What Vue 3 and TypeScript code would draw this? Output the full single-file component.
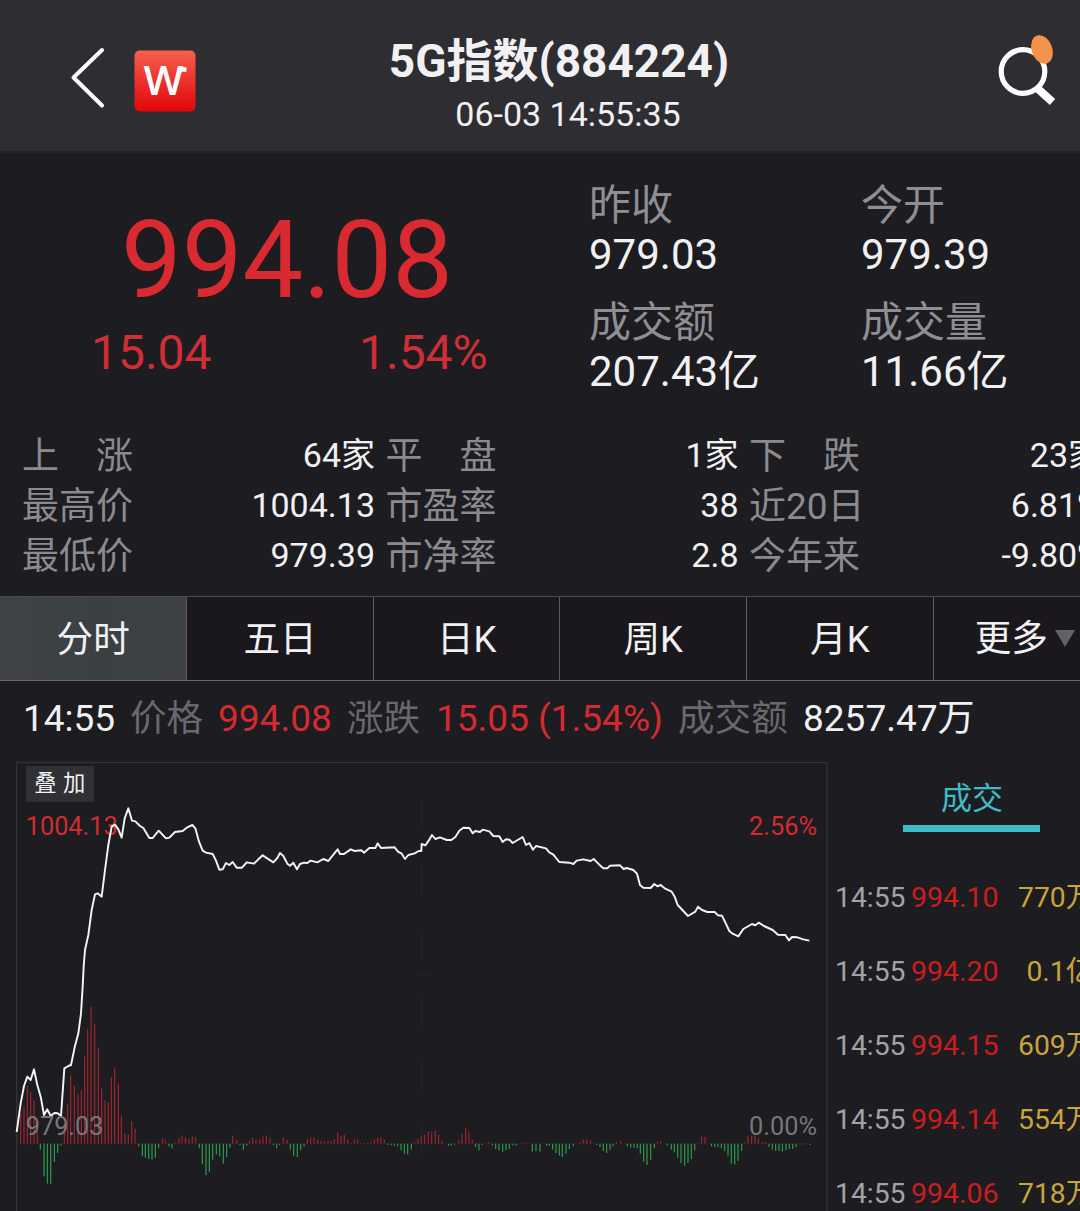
<script setup lang="ts">
interface Quote { label: string; value: string }
interface Trade { time: string; price: string; volume: string }

const quotes: Quote[] = [
  { label: '昨收', value: '979.03' },
  { label: '今开', value: '979.39' },
  { label: '成交额', value: '207.43亿' },
  { label: '成交量', value: '11.66亿' },
]

const stats: Quote[] = [
  { label: '上　涨', value: '64家' },
  { label: '平　盘', value: '1家' },
  { label: '下　跌', value: '23家' },
  { label: '最高价', value: '1004.13' },
  { label: '市盈率', value: '38' },
  { label: '近20日', value: '6.81%' },
  { label: '最低价', value: '979.39' },
  { label: '市净率', value: '2.8' },
  { label: '今年来', value: '-9.80%' },
]

const tabs: string[] = ['分时', '五日', '日K', '周K', '月K', '更多']

const trades: Trade[] = [
  { time: '14:55', price: '994.10', volume: '770万' },
  { time: '14:55', price: '994.20', volume: '0.1亿' },
  { time: '14:55', price: '994.15', volume: '609万' },
  { time: '14:55', price: '994.14', volume: '554万' },
  { time: '14:55', price: '994.06', volume: '718万' },
]

// Minute line, in chart units (three per pixel)
const line = `50,1146 62,1060 72,1008 82,980 92,990 102,958 112,1005 122,1040 132,1095 142,1078 152,1098 163,1089
173,1090 183,1098 193,955 205,948 213,945 224,892 235,850 243,790 248,710 251,650 255,600 265,555 275,480 285,433
293,430 305,440 315,360 325,285 335,230 345,224 355,238 365,263 374,205 385,175 396,212 406,214 420,228 430,234
448,264 458,264 476,242 498,265 508,263 525,246 548,243 562,232 577,225 586,235 597,275 608,302 618,308 638,312
648,332 658,359 668,358 678,339 688,345 698,336 710,353 726,353 740,337 762,341 775,328 788,316 820,337 832,324
840,309 850,318 862,341 870,347 880,338 891,358 900,342 912,338 922,339 932,332 952,337 970,327 985,333 1000,314
1013,298 1020,312 1032,312 1052,298 1064,303 1084,301 1092,308 1108,294 1126,294 1133,280 1143,294 1184,292
1194,305 1204,310 1215,327 1225,315 1244,310 1256,303 1264,303 1265,282 1276,286 1286,272 1296,255 1306,267
1320,262 1340,270 1354,270 1366,261 1378,242 1390,233 1408,234 1418,250 1426,243 1440,246 1448,239 1468,244
1480,258 1498,259 1508,276 1518,268 1528,269 1538,279 1568,261 1578,285 1588,279 1599,299 1608,288 1638,295
1648,307 1660,314 1678,336 1708,338 1720,342 1730,332 1750,328 1772,333 1781,327 1798,344 1810,355 1822,355
1830,347 1860,346 1871,357 1880,354 1900,360 1911,371 1920,405 1930,413 1952,414 1963,402 1972,409 1982,405
1994,415 2015,425 2024,440 2033,465 2050,483 2064,498 2086,485 2094,470 2106,480 2122,486 2144,486 2154,496
2166,497 2178,522 2188,543 2198,551 2215,559 2230,537 2256,522 2266,526 2276,518 2292,528 2318,540 2334,554
2356,555 2367,571 2376,561 2392,562 2410,568 2428,572`

// Momentum bars as "x,height"; a positive height rises above the base line
const barData = `62,90 72,110 82,175 92,155 102,130 112,45 121,-18 132,-98 142,-120 152,-120 163,-55 173,-28 183,-6
193,60 203,120 212,205 223,175 234,150 244,160 254,262 263,345 273,410 284,360 295,288 305,165 315,130 325,125
334,200 344,228 355,180 364,85 375,30 385,28 395,68 405,45 416,-8 427,-38 436,-42 446,-46 456,-48 466,-42 476,-14
487,16 496,12 507,-8 516,-14 527,4 537,18 546,24 556,18 567,14 577,22 587,20 598,-14 607,-62 618,-94 628,-85
638,-48 649,-32 659,-38 670,-60 680,-40 690,-12 698,24 710,12 720,-4 730,-18 740,-6 748,8 758,18 768,12 779,14
789,22 799,24 810,18 820,-4 830,-14 839,-4 850,18 861,12 871,-18 881,-36 892,-40 902,-20 912,-8 922,14 932,18
942,18 953,12 963,8 974,6 984,8 994,8 1003,14 1013,34 1023,24 1033,26 1043,12 1053,3 1063,14 1073,12 1083,2
1093,2 1103,3 1113,6 1123,12 1133,18 1143,18 1153,12 1163,-4 1173,-5 1183,-6 1193,-8 1203,-20 1213,-30 1223,-32
1234,-18 1244,4 1254,14 1264,22 1274,26 1285,36 1295,36 1306,40 1316,26 1326,8 1346,-6 1354,-6 1364,-3 1376,10
1386,30 1397,46 1407,36 1417,12 1427,-10 1437,-20 1447,-4 1466,5 1477,-5 1487,-16 1497,-20 1508,-25 1518,-20
1528,-16 1539,-6 1549,-6 1567,3 1577,3 1597,-24 1608,-22 1620,-24 1640,-6 1648,-6 1658,-18 1668,-28 1678,-36
1687,-40 1698,-30 1708,-16 1720,-8 1740,5 1750,12 1760,12 1771,9 1790,-4 1800,-10 1810,-22 1820,-28 1830,-18
1839,-8 1850,5 1862,8 1882,-8 1892,-12 1902,-12 1912,-14 1921,-30 1931,-54 1941,-64 1952,-48 1963,-14 1972,5
1982,8 2002,-5 2014,-18 2023,-26 2033,-42 2043,-58 2054,-66 2064,-58 2074,-46 2084,-20 2094,3 2105,22 2115,20
2134,-8 2144,-10 2154,-10 2164,-14 2174,-22 2184,-36 2194,-60 2204,-62 2214,-52 2225,-22 2234,4 2244,24 2255,24
2265,24 2275,16 2286,5 2296,5 2307,-10 2317,-18 2327,-22 2337,-22 2347,-24 2358,-20 2368,-16 2378,-16 2388,-10
2400,-2 2410,-2 2430,-4`

const base = 1181
const bars = barData.split(/\s+/).map((pair) => {
  const [x, h] = pair.split(',').map(Number)
  return { x: x - 1.7, y: h > 0 ? base - h : base, h: Math.abs(h), up: h > 0 }
})
</script>

<template>
  <div class="page">
    <header class="header">
      <div class="nav">
        <svg class="back" width="40" height="64" viewBox="0 0 40 64">
          <path d="M36 4 7.500 31.500 36 59.500" fill="none" stroke="#fff" stroke-width="4" stroke-linecap="round" stroke-linejoin="round" />
        </svg>
        <svg class="logo" width="62" height="62" viewBox="0 0 62 62">
          <defs>
            <linearGradient id="logo-fill" x1="0" y1="0" x2="0" y2="1">
              <stop offset="0" stop-color="#f4614b" />
              <stop offset="0.45" stop-color="#ee3531" />
              <stop offset="1" stop-color="#df0708" />
            </linearGradient>
          </defs>
          <rect x="0.500" y="0.500" width="61" height="61" rx="5" fill="url(#logo-fill)" />
          <text class="logo-letter" x="9.500" y="45" textLength="40" lengthAdjust="spacingAndGlyphs">W</text>
          <rect x="43.500" y="17.200" width="9" height="4.600" rx="0.500" fill="#fff" />
        </svg>
      </div>
      <div class="heading">
        <h1 class="title">5G指数(884224)</h1>
        <div class="stamp">06-03 14:55:35</div>
      </div>
      <svg class="search" width="70" height="84" viewBox="0 0 70 84">
        <circle cx="33" cy="40.500" r="21.800" fill="none" stroke="#fff" stroke-width="5.200" />
        <path d="M46.500 56.500 62.500 71" stroke="#fff" stroke-width="8" />
        <ellipse cx="52" cy="18.500" rx="10.200" ry="14.800" fill="#f5924a" transform="rotate(-20 52 18.500)" />
      </svg>
    </header>

    <section class="overview">
      <div class="price">
        <div class="last">994.08</div>
        <div class="change"><span>15.04</span><span>1.54%</span></div>
      </div>
      <dl class="quotes">
        <div v-for="q in quotes" :key="q.label" class="quote">
          <dt>{{ q.label }}</dt>
          <dd>{{ q.value }}</dd>
        </div>
      </dl>
    </section>

    <section class="stats">
      <div v-for="s in stats" :key="s.label" class="stat">
        <span class="stat-label">{{ s.label }}</span>
        <span>{{ s.value }}</span>
      </div>
    </section>

    <nav class="tabs">
      <div v-for="(t, i) in tabs" :key="t" class="tab" :class="{ active: i === 0, more: i === 5 }">
        {{ t }}<i v-if="i === 5" class="caret"></i>
      </div>
    </nav>

    <div class="ticker">
      <span class="t-time">14:55</span><span class="t-key">价格</span><span class="t-price up">994.08</span>
      <span class="t-key t-diff">涨跌</span><span class="t-chg up">15.05 (1.54%)</span>
      <span class="t-key t-amt">成交额</span><span>8257.47万</span>
    </div>

    <main class="market">
      <svg class="chart" width="830" height="461" viewBox="0 0 2490 1383">
        <path d="M50 1383V37.500H2481V1383" fill="none" stroke="#333337" stroke-width="4" />
        <path d="M1265 150V1300" stroke="#242529" stroke-width="3" stroke-dasharray="90 105" />
        <path d="M1248 673H1296" stroke="#28292c" stroke-width="3" />
        <rect x="78" y="48" width="204" height="108" fill="#303035" />
        <text class="overlay-label" x="103" y="124">叠</text>
        <text class="overlay-label" x="189" y="124">加</text>
        <path d="M60 1181.500H2430" stroke="#3b2a2c" stroke-width="2" stroke-dasharray="5 5" />
        <rect
          v-for="b in bars" :key="b.x" :x="b.x" :y="b.y" width="3.400" :height="b.h"
          :fill="b.up ? '#a3262d' : '#2da04a'"
        />
        <text class="axis up" x="77" y="255">1004.13</text>
        <text class="axis up" x="2451" y="255" text-anchor="end">2.56%</text>
        <polyline :points="line" fill="none" stroke="#f4f4f4" stroke-width="5.800" stroke-linejoin="round" />
        <text class="axis" x="77" y="1154">979.03</text>
        <text class="axis" x="2451" y="1154" text-anchor="end">0.00%</text>
      </svg>
      <aside class="trades">
        <div class="trades-tab">成交</div>
        <div v-for="(t, i) in trades" :key="i" class="trade">
          <span class="trade-time">{{ t.time }}</span>
          <span class="trade-price">{{ t.price }}</span>
          <span class="trade-vol">{{ t.volume }}</span>
        </div>
      </aside>
    </main>
  </div>
</template>

<style>
body {
  margin: 0;
  background: #1d1c20;
}
</style>

<style scoped>
.page {
  width: 1080px;
  height: 1211px;
  overflow: hidden;
  display: flex;
  flex-direction: column;
  background: #1d1c20;
  color: #f1f1f3;
  font-family: Roboto, "Noto Sans CJK SC", sans-serif;
  white-space: nowrap;
}

.up {
  color: #d32b30;
  fill: #d32b30;
}

.header {
  box-sizing: border-box;
  height: 153px;
  flex: none;
  display: grid;
  grid-template-columns: 360px 1fr 120px;
  background: #2e2d32;
  border-bottom: 2px solid #232227;
}

.nav {
  display: flex;
  align-items: flex-start;
}

.back {
  margin: 46px 0 0 66px;
}

.logo {
  margin: 50px 0 0 27.500px;
}

.logo-letter {
  font: 600 39px "Open Sans", sans-serif;
  fill: #fff;
}

.heading {
  width: 398px;
  text-align: center;
}

.title {
  margin: 31px 0 0;
  font-size: 46px;
  line-height: 60px;
  font-weight: 700;
}

.stamp {
  margin: -2px 0 0 18px;
  font-size: 34px;
  line-height: 50px;
}

.search {
  margin: 31px 0 0 30px;
}

.overview {
  height: 277px;
  flex: none;
  display: flex;
}

.price {
  width: 589px;
  color: #da2a31;
}

.last {
  margin-top: 47px;
  padding-left: 121px;
  font-size: 108px;
  line-height: 120px;
}

.change {
  display: grid;
  grid-template-columns: 268px 1fr;
  margin-top: 3px;
  padding-left: 91px;
  font-size: 48px;
  line-height: 60px;
  color: #cf2e35;
}

.quotes {
  margin: 28px 0 0;
  display: grid;
  grid-template-columns: 272px 219px;
  grid-auto-rows: 117px;
  font-size: 42px;
  line-height: 50px;
}

.quote dt {
  height: 49px;
  color: #8f8e93;
}

.quote dd {
  margin: 0;
}

.stats {
  height: 166px;
  flex: none;
  display: grid;
  grid-template-columns: repeat(3, 353px);
  column-gap: 10.500px;
  grid-auto-rows: 50px;
  padding-left: 22px;
  font-size: 34px;
  line-height: 50px;
}

.stat {
  display: flex;
  justify-content: space-between;
}

.stat-label {
  padding-top: 2px;
  font-size: 37px;
  line-height: 50px;
  color: #8b8a8f;
}

.tabs {
  box-sizing: border-box;
  height: 85px;
  flex: none;
  display: flex;
  border-top: 1.500px solid #4b494e;
  border-bottom: 1px solid #68676c;
  background: #1a181c;
}

.tab {
  box-sizing: border-box;
  width: 186.600px;
  flex: none;
  border-right: 1px solid #5d5c61;
  font-size: 36.600px;
  line-height: 86px;
  text-align: center;
}

.tab:first-child {
  width: 187.300px;
}

.tab.active {
  background: linear-gradient(90deg, #404345, #3b4143 50%, #3d4143);
}

.tab.more {
  display: flex;
  align-items: center;
  padding-left: 41px;
  text-align: left;
}

.caret {
  margin-left: 7px;
  border: 10.500px solid transparent;
  border-top: 17px solid #626166;
  border-bottom: 0;
}

.ticker {
  height: 69px;
  flex: none;
  display: flex;
  padding: 0 0 0 23px;
  font-size: 37px;
  line-height: 75.500px;
}

.t-time {
  width: 107px;
}

.t-key {
  width: 88px;
  font-size: 36.600px;
  color: #69686c;
}

.t-price {
  width: 129px;
}

.t-diff {
  width: 89px;
}

.t-chg {
  width: 242px;
}

.t-amt {
  width: 125px;
}

.market {
  flex: 1;
  display: flex;
}

.chart {
  flex: none;
}

.overlay-label {
  font-size: 67px;
  fill: #f1f1f3;
}

.axis {
  font-size: 76px;
}

.axis:not(.up) {
  fill: #77767b;
}

.trades {
  width: 280px;
  flex: none;
}

.trades-tab {
  box-sizing: border-box;
  width: 137px;
  height: 61px;
  margin: 21px 0 37px 73px;
  padding-left: 1px;
  border-bottom: 7px solid #3fbcc6;
  color: #3fbcc6;
  font-size: 31px;
  line-height: 55px;
  text-align: center;
}

.trade {
  display: flex;
  height: 74px;
  padding-left: 5px;
  font-size: 28.300px;
  line-height: 58px;
}

.trade-time {
  width: 76px;
  color: #a3a2a6;
}

.trade-price {
  width: 88px;
  font-size: 28.500px;
  color: #cb1d1d;
}

.trade-vol {
  width: 95px;
  text-align: right;
  color: #c8a43a;
}
</style>
